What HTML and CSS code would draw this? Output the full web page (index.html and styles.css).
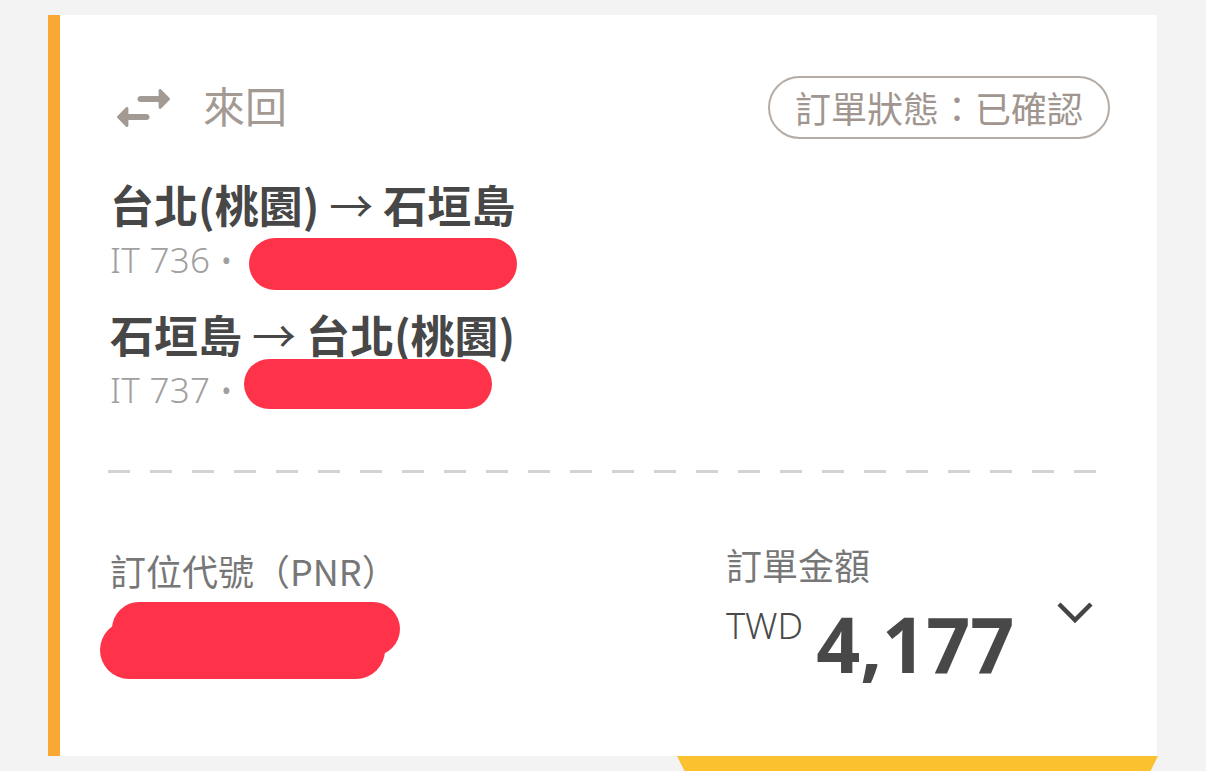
FILE: index.html
```html
<!DOCTYPE html>
<html lang="zh-Hant">
<head>
<meta charset="utf-8">
<title>訂單</title>
<link rel="stylesheet" href="styles.css">
</head>
<body>
<div class="card">
  <div class="head">
    <div class="trip">
      <svg class="swap" viewBox="3.2 5.7 17.6 12.6" aria-hidden="true"><path d="M6.14 11.86l-2.78 2.79c-.19.2-.19.51 0 .71l2.78 2.79c.31.32.85.09.85-.35V16H13c.55 0 1-.45 1-1s-.45-1-1-1H6.99v-1.79c0-.45-.54-.67-.85-.35zm14.51-3.21l-2.78-2.79c-.31-.32-.85-.09-.85.35V8H11c-.55 0-1 .45-1 1s.45 1 1 1h6.01v1.79c0 .45.54.67.85.35l2.78-2.79c.2-.19.2-.51.01-.7z"/></svg>
      <span class="trip-label">來回</span>
    </div>
    <div class="status">訂單狀態：已確認</div>
  </div>

  <div class="seg seg-first">
    <div class="route">台北(桃園) <span class="arrow">→</span> 石垣島</div>
    <div class="flight"><span class="flight-no">IT 736 •</span><span class="redact redact-1"></span></div>
  </div>
  <div class="seg">
    <div class="route">石垣島 <span class="arrow">→</span> 台北(桃園)</div>
    <div class="flight"><span class="flight-no">IT 737 •</span><span class="redact redact-2"></span></div>
  </div>

  <div class="divider"></div>

  <div class="bottom">
    <div class="pnr">
      <div class="label pnr-label">訂位代號（PNR）</div>
      <div class="pnr-value">
        <span class="blob blob-a"></span>
        <span class="blob blob-b"></span>
      </div>
    </div>
    <div class="amount">
      <div class="label">訂單金額</div>
      <div class="price"><span class="cur">TWD</span><span class="num">4,177</span></div>
    </div>
    <svg class="chev" viewBox="0 0 38 26" aria-hidden="true"><path d="M3 4 L19 20 L35 4"/></svg>
  </div>
</div>
<div class="tab"></div>
</body>
</html>
```

FILE: styles.css
```css
html, body {
  margin: 0;
  padding: 0;
}
body {
  background: #f3f3f3;
  font-family: "Noto Sans", "Noto Sans CJK TC", sans-serif;
  overflow: hidden;
}
.card {
  margin: 15px 0 0 48px;
  width: 1109px;
  height: 741px;
  box-sizing: border-box;
  background: #fff;
  border-left: 12px solid #f9a833;
  padding: 61px 47px 0 50px;
}
.head {
  display: flex;
  align-items: center;
  justify-content: space-between;
  height: 63px;
}
.trip {
  display: flex;
  align-items: center;
}
.swap {
  width: 53px;
  height: 38px;
  margin-left: 7px;
  fill: #a39a93;
}
.trip-label {
  margin: 0 0 6px 33px;
  font-family: "Noto Sans CJK TC", sans-serif;
  font-size: 42px;
  line-height: 50px;
  color: #a39a93;
}
.status {
  box-sizing: border-box;
  height: 63px;
  border: 2px solid #b5aca5;
  border-radius: 32px;
  padding: 0 25px;
  font-family: "Noto Sans CJK TC", sans-serif;
  font-size: 36px;
  line-height: 59px;
  color: #a0968f;
}
.seg-first {
  margin-top: 37px;
}
.seg + .seg {
  margin-top: 18px;
}
.route {
  font-family: "Noto Sans CJK TC", sans-serif;
  font-weight: 700;
  font-size: 44px;
  line-height: 56px;
  color: #474747;
}
.arrow {
  font-weight: 400;
}
.flight {
  display: flex;
  align-items: center;
  height: 56px;
}
.flight-no {
  font-size: 35px;
  font-weight: 300;
  line-height: 56px;
  letter-spacing: 0.3px;
  color: #a0a0a0;
}
.redact {
  display: block;
  background: #fe3349;
  border-radius: 26px;
}
.redact-1 {
  width: 268px;
  height: 52px;
  margin-left: 16px;
  margin-top: 8px;
}
.redact-2 {
  width: 248px;
  height: 50px;
  margin-left: 11px;
  margin-bottom: 12px;
}
.divider {
  margin: 52px 0 0 -2px;
  width: 988px;
  height: 3px;
  background: repeating-linear-gradient(to right, #d3d3d3 0 22px, transparent 22px 42px);
}
.bottom {
  display: flex;
  align-items: flex-start;
  padding-top: 67px;
}
.label {
  font-family: "Noto Sans CJK TC", sans-serif;
  font-size: 36px;
  line-height: 48px;
  color: #777;
}
.pnr {
  width: 616px;
}
.pnr-label {
  margin-top: 6px;
}
.pnr-value {
  position: relative;
  height: 77px;
  margin-top: 8px;
}
.blob {
  position: absolute;
  background: #fe3349;
  border-radius: 30px;
}
.blob-a {
  left: 2px;
  top: 0;
  width: 288px;
  height: 54px;
}
.blob-b {
  left: -10px;
  top: 19px;
  width: 285px;
  height: 58px;
}
.amount {
  flex: 1;
}
.price {
  display: flex;
  align-items: flex-start;
  margin-top: 17px;
  color: #484848;
}
.cur {
  margin-top: 3px;
  font-size: 36px;
  font-weight: 300;
  line-height: 36px;
  color: #4a4a4a;
}
.num {
  margin-left: 13px;
  font-weight: 700;
  font-size: 77px;
  line-height: 78px;
}
.chev {
  width: 38px;
  height: 26px;
  margin: 60px 16px 0 0;
  fill: none;
  stroke: #444;
  stroke-width: 4.5;
}
.tab {
  margin-left: 677px;
  width: 481px;
  height: 20px;
  background: #fbc12f;
  clip-path: polygon(0 0, 100% 0, calc(100% - 10px) 100%, 10px 100%);
}
```
